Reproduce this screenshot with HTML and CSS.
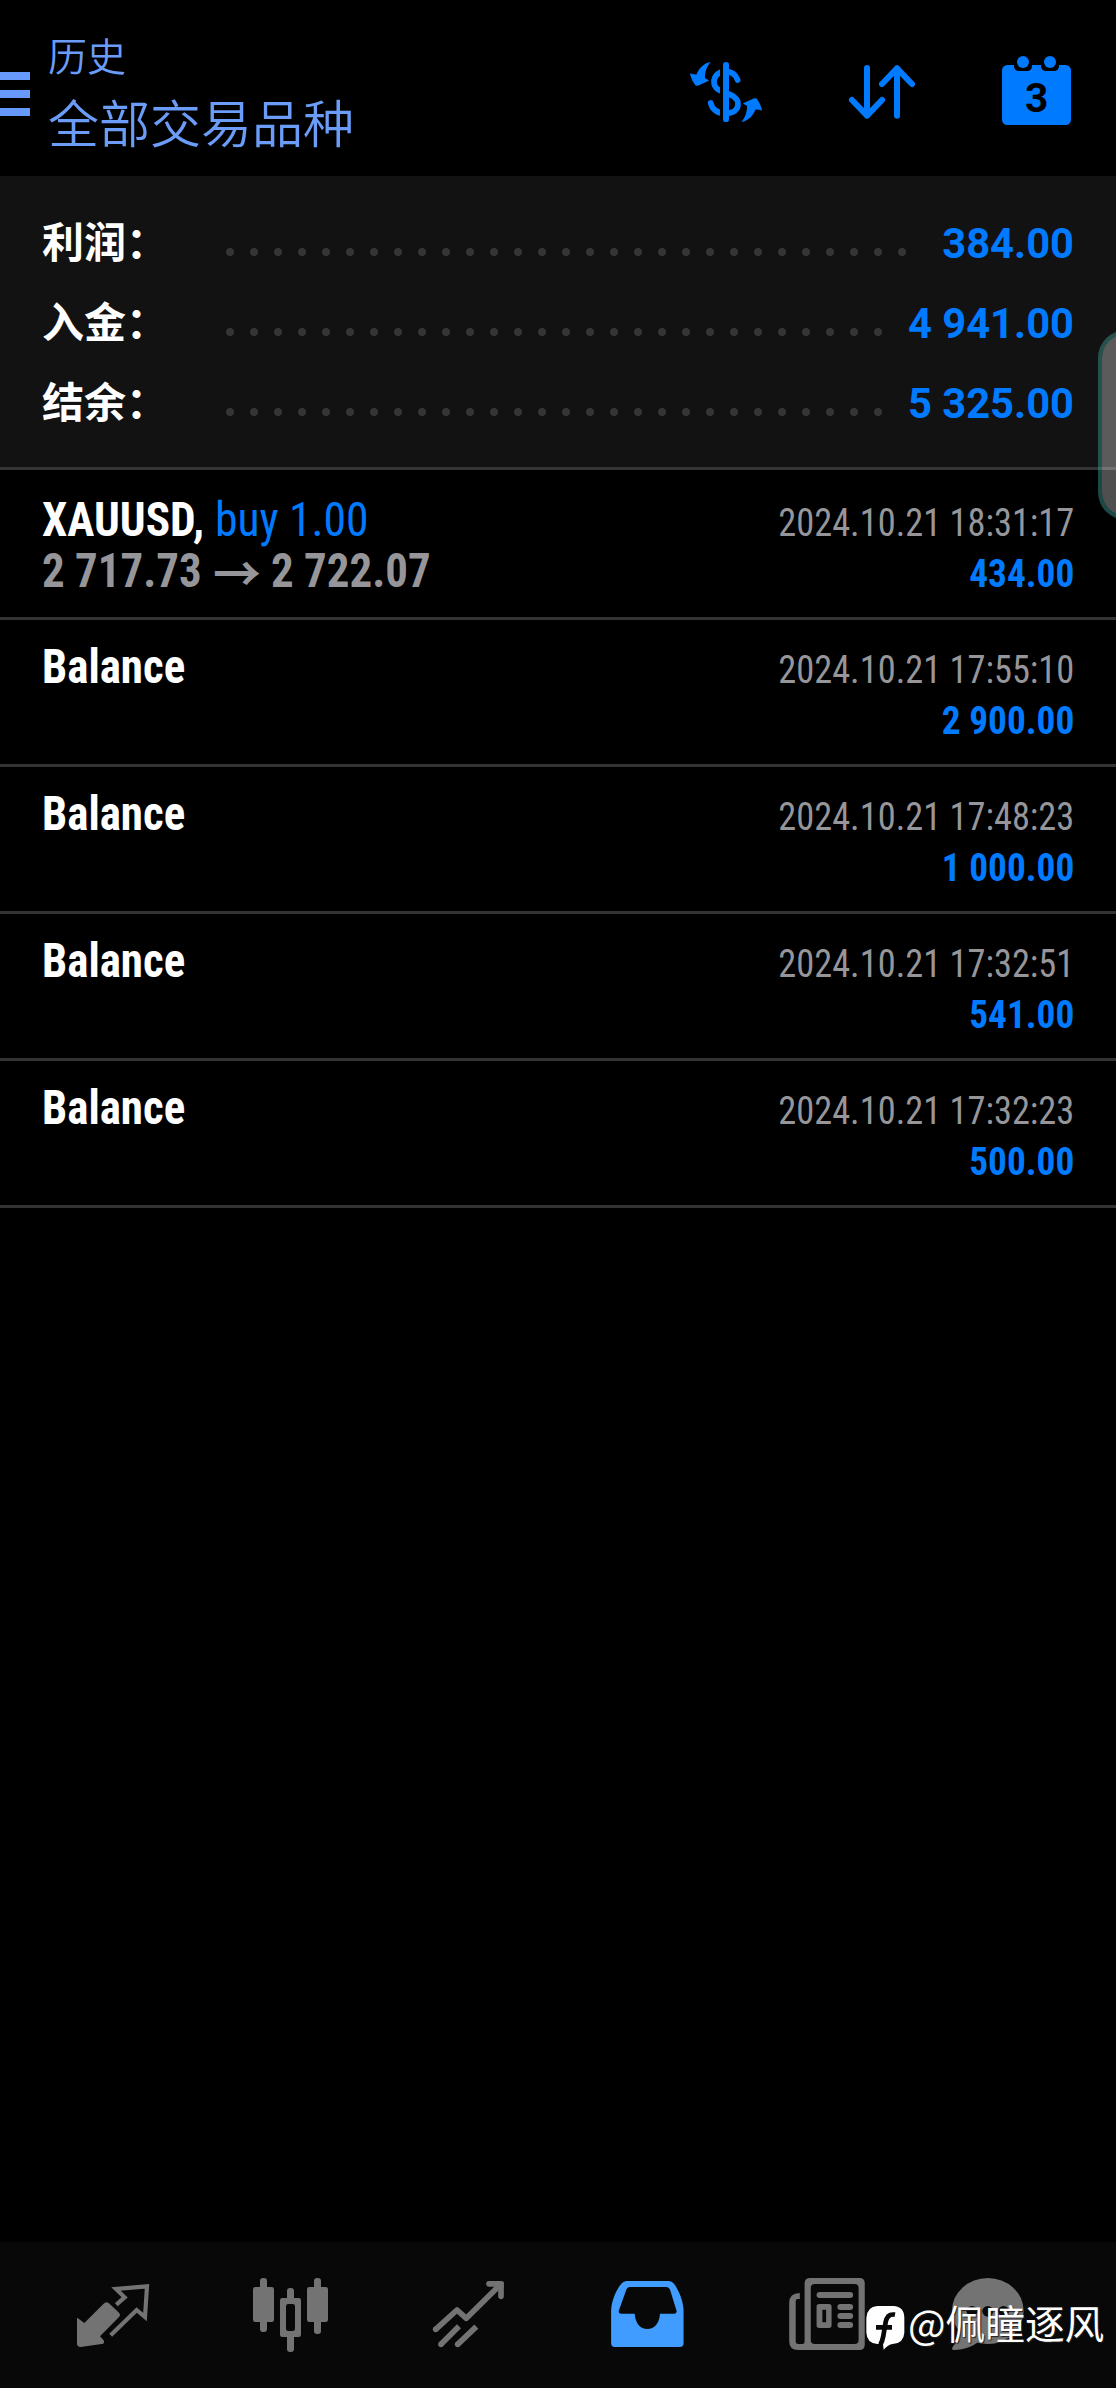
FILE: index.html
```html
<!DOCTYPE html>
<html lang="zh-CN">
<head>
<meta charset="utf-8">
<title>历史</title>
<link rel="stylesheet" href="styles.css">
</head>
<body>
<div class="app">
  <header class="topbar">
    <div class="menu"><i></i><i></i><i></i></div>
    <div class="heading">
      <div class="sub">历史</div>
      <div class="title">全部交易品种</div>
    </div>
    <div class="actions">
      <svg width="74" height="71" viewBox="57 75 222 213">
        <path d="M203 150C197 132 183 124 166 124C146 124 132 138 132 155C132 175 148 182 166 188C190 195 204 205 204 222C204 240 190 250 166 250C140 250 127 238 122 219" fill="none" stroke="#007aff" stroke-width="17" stroke-linecap="round"/>
        <rect x="150" y="100" width="10" height="172" fill="#000"/>
        <rect x="159" y="96" width="18" height="180" rx="8.5" fill="#007aff"/>
        <path id="swap" d="M122 96C104 99 88 112 80 133Q70 134 60 130C62 145 70 158 77 167Q85 168 90 164L117 152Q112 147 105 145C104 128 110 110 122 96Z" fill="#007aff"/>
        <use href="#swap" transform="rotate(180 168 186)"/>
      </svg>
      <svg class="sort" width="68" height="71" viewBox="534 75 204 213" fill="none" stroke="#007aff" stroke-width="18" stroke-linecap="round" stroke-linejoin="round">
        <path d="M591 114V257M546 210L591 257L636 210M681 257V115M636 162L681 115L726 162"/>
      </svg>
      <svg class="calendar" width="69" height="71" viewBox="996 75 207 213" fill="#007aff">
        <rect x="996" y="105" width="207" height="180" rx="16"/>
        <path d="M1032 96H1086V107Q1086 123 1070 123H1048Q1032 123 1032 107ZM1113 96H1167V107Q1167 123 1151 123H1129Q1113 123 1113 107Z" fill="#000"/>
        <circle cx="1059" cy="96" r="18"/><circle cx="1140" cy="96" r="18"/>
        <text class="day" x="1100" y="247" text-anchor="middle">3</text>
      </svg>
    </div>
  </header>

  <section class="summary">
    <div class="sum-row"><span class="label">利润：</span><span class="dots dots-long"></span><span class="value">384.00</span></div>
    <div class="sum-row"><span class="label">入金：</span><span class="dots"></span><span class="value">4 941.00</span></div>
    <div class="sum-row"><span class="label">结余：</span><span class="dots"></span><span class="value">5 325.00</span></div>
  </section>

  <main class="deals">
    <article class="deal trade">
      <div class="left">
        <div class="line"><b class="symbol">XAUUSD,</b><span class="side">buy 1.00</span></div>
        <div class="line prices"><b class="open">2 717.73</b><b class="arrow">→</b><b class="close">2 722.07</b></div>
      </div>
      <div class="right"><div class="time">2024.10.21 18:31:17</div><div class="amount">434.00</div></div>
    </article>
    <article class="deal">
      <div class="left"><div class="line"><b class="balance">Balance</b></div></div>
      <div class="right"><div class="time">2024.10.21 17:55:10</div><div class="amount">2 900.00</div></div>
    </article>
    <article class="deal">
      <div class="left"><div class="line"><b class="balance">Balance</b></div></div>
      <div class="right"><div class="time">2024.10.21 17:48:23</div><div class="amount">1 000.00</div></div>
    </article>
    <article class="deal">
      <div class="left"><div class="line"><b class="balance">Balance</b></div></div>
      <div class="right"><div class="time">2024.10.21 17:32:51</div><div class="amount">541.00</div></div>
    </article>
    <article class="deal">
      <div class="left"><div class="line"><b class="balance">Balance</b></div></div>
      <div class="right"><div class="time">2024.10.21 17:32:23</div><div class="amount">500.00</div></div>
    </article>
  </main>

  <nav class="tabs">
    <svg viewBox="102 141 234 228">
      <path d="M111 264Q113 263 116 266L133 279L190 222Q198 213 206 219L237 248Q243 255 237 261L180 319L191 331Q194 338 190 341L122 351Q111 350 111 341Z" fill="#737373"/>
      <path d="M229 224L254 202L228 177L321 169L315 261L290 240L212 316" fill="none" stroke="#737373" stroke-width="12.5"/>
    </svg>
    <svg viewBox="636 141 234 228" fill="#737373">
      <rect x="639" y="171" width="63" height="105" rx="7"/><rect x="660" y="144" width="21" height="162" rx="9"/>
      <rect x="801" y="171" width="63" height="105" rx="7"/><rect x="822" y="144" width="21" height="168" rx="9"/>
      <rect x="720" y="204" width="63" height="117" rx="7"/><rect x="741" y="174" width="21" height="192" rx="9"/>
      <rect x="738" y="222" width="27" height="81" rx="7" fill="#080808"/>
    </svg>
    <svg viewBox="1170 141 234 228" fill="none" stroke="#737373" stroke-width="17">
      <path d="M1187 298L1251 240L1279 265L1377 168" stroke-linejoin="round"/>
      <path d="M1347 161.500H1383V199" stroke-linecap="round" stroke-linejoin="round"/>
      <path d="M1203 343L1257 289M1253 343L1309 290"/>
      <g fill="#737373" stroke="none"><circle cx="1187" cy="298" r="8.500"/><circle cx="1203" cy="343" r="8.500"/><circle cx="1253" cy="343" r="8.500"/><path d="M1370 155H1391V175Z"/></g>
    </svg>
    <svg viewBox="81.900 141 228.200 228" preserveAspectRatio="none">
      <path fill="#409cff" fill-rule="evenodd" d="M136 153H260Q269 153 275 161C290 183 303 215 303 242V340Q303 351 292 351H102Q91 351 91 340V242C92 215 105 180 121 161Q128 153 136 153ZM146 171Q139 171 136 178L114 241Q111 251 121 251H160C162 280 176 297 197 297C218 297 232 280 234 251H275Q285 251 282 241L263 178Q259 171 252 171Z"/>
    </svg>
    <svg viewBox="602.600 141 228.200 228" preserveAspectRatio="none" fill="#737373">
      <path fill-rule="evenodd" d="M674 144H817Q833 144 833 160V344Q833 360 817 360H638Q612 360 612 334V218Q612 190 643 189V207H637Q631 207 631 214V335Q631 342 638 342H651Q657 342 657 335V160Q657 144 674 144ZM687 162Q675 162 675 174V330Q675 342 687 342H803Q815 342 815 330V174Q815 162 803 162Z"/>
      <rect x="692" y="186" width="107" height="18" rx="9"/>
      <path fill-rule="evenodd" d="M700 222H728Q736 222 736 230V286Q736 294 728 294H700Q692 294 692 286V230Q692 222 700 222ZM709 239V277H720V239Z"/>
      <rect x="753" y="222" width="46" height="18" rx="9"/><rect x="753" y="249" width="46" height="18" rx="9"/><rect x="753" y="276" width="46" height="18" rx="9"/>
    </svg>
    <svg class="chat" viewBox="1076.600 141 228.200 228" preserveAspectRatio="none" fill="#737373">
      <ellipse cx="1193" cy="243" rx="105" ry="99"/>
      <path d="M1105 285Q1114 328 1092 348Q1085 357 1092 360C1120 361 1150 350 1168 334Z"/>
      <g fill="#080808"><circle cx="1147" cy="244" r="16"/><circle cx="1193" cy="244" r="16"/><circle cx="1239" cy="244" r="16"/></g>
    </svg>
  </nav>

  <div class="handle"></div>
  <div class="watermark">
    <svg width="38" height="44" viewBox="18 30 114 132">
      <path fill="#fff" d="M52 30H100Q133 32 133 66V110Q131 142 98 144Q84 146 71 161L69 144H52Q21 142 19 110V66Q21 32 52 30Z"/>
      <path d="M105 56Q82 52 77 78L70 120Q67 136 61 146M48 94H96" fill="none" stroke="#080808" stroke-width="14"/>
    </svg>
    <span>@佩瞳逐风</span>
  </div>
</div>
</body>
</html>
```
FILE: styles.css
```css
* { box-sizing: border-box; }
body {
  margin: 0;
  background: #000;
  font-family: "Roboto Condensed", Roboto, "Noto Sans CJK SC", sans-serif;
}
.app {
  position: relative;
  display: flex;
  flex-direction: column;
  width: 1116px;
  height: 2388px;
  overflow: hidden;
}
svg { display: block; flex: none; overflow: visible; }

.topbar { display: flex; height: 176px; color: #6a9cf8; }
.menu { display: flex; flex-direction: column; gap: 10px; width: 30px; padding-top: 72px; }
.menu i { height: 8px; background: #6699fa; }
.heading {
  flex: 1;
  padding: 25px 0 0 18px;
  font-family: "Noto Sans CJK SC DemiLight", "Noto Sans CJK SC", sans-serif;
  font-weight: 400;
}
.sub { font-size: 39px; line-height: 58px; }
.title { font-size: 51px; line-height: 76px; }
.actions { display: flex; padding: 55px 45px 0 0; }
.sort { margin-left: 85px; }
.calendar { margin-left: 86px; }
.day { font: 700 122px Roboto, sans-serif; fill: #000; }

.summary {
  height: 294px;
  padding: 26px 42px 0 42px;
  background: #121212;
  border-bottom: 3px solid #333;
}
.sum-row { display: flex; height: 80px; line-height: 80px; font-size: 42px; font-weight: 700; }
.label { width: 176px; color: #fff; font-family: "Noto Sans CJK SC", sans-serif; line-height: 76px; }
.dots {
  width: 672px;
  height: 24px;
  margin-top: 38px;
  background: radial-gradient(circle at center, #353535 3.6px, transparent 4.4px) 0 0 / 24px 24px repeat-x;
}
.dots-long { width: 696px; }
.value {
  flex: 1;
  color: #007aff;
  font-family: Roboto, sans-serif;
  line-height: 83px;
  text-align: right;
  white-space: nowrap;
  transform: scaleX(0.993);
  transform-origin: right;
}

.deals { flex: 1; }
.deal {
  display: flex;
  justify-content: space-between;
  height: 147px;
  padding: 21px 42px 0 42px;
  border-bottom: 3px solid #333;
  white-space: nowrap;
}
.trade { height: 150px; padding-top: 24px; }
.left { font-size: 48px; line-height: 51px; color: #fff; }
.line { display: flex; height: 51px; }
.symbol, .side, .open, .close, .balance { transform: scaleX(0.936); transform-origin: left; }
.symbol { width: 163px; transform: scaleX(0.943); }
.side { margin-left: 10px; color: #007aff; transform: scaleX(0.95); }
.prices { color: #96969a; }
.open { width: 161px; }
.arrow { margin: 0 10px; font-family: "Noto Sans CJK SC", sans-serif; }
.right { padding-top: 4px; font-size: 39px; line-height: 51px; text-align: right; }
.time { color: #96969a; transform: scaleX(0.933); transform-origin: right; }
.amount { color: #007aff; font-weight: 700; transform: scaleX(0.956); transform-origin: right; }

.tabs { display: flex; gap: 100px; height: 146px; padding: 35px 0 0 74px; background: #080808; }
.tabs svg { width: 78px; height: 76px; }
.tabs .chat { margin-left: -16px; }

.handle {
  position: absolute;
  left: 1098px;
  top: 330px;
  width: 60px;
  height: 190px;
  border: 4.5px solid rgba(62, 160, 155, 0.45);
  border-radius: 28px;
  background: rgba(255, 255, 255, 0.31) padding-box;
}
.watermark {
  position: absolute;
  left: 866px;
  top: 2306px;
  display: flex;
  gap: 4px;
  color: #fff;
  font: 400 39.700px/31px "Noto Sans CJK SC", sans-serif;
  text-shadow: 1px 1px 1px #222;
  white-space: nowrap;
}
```
